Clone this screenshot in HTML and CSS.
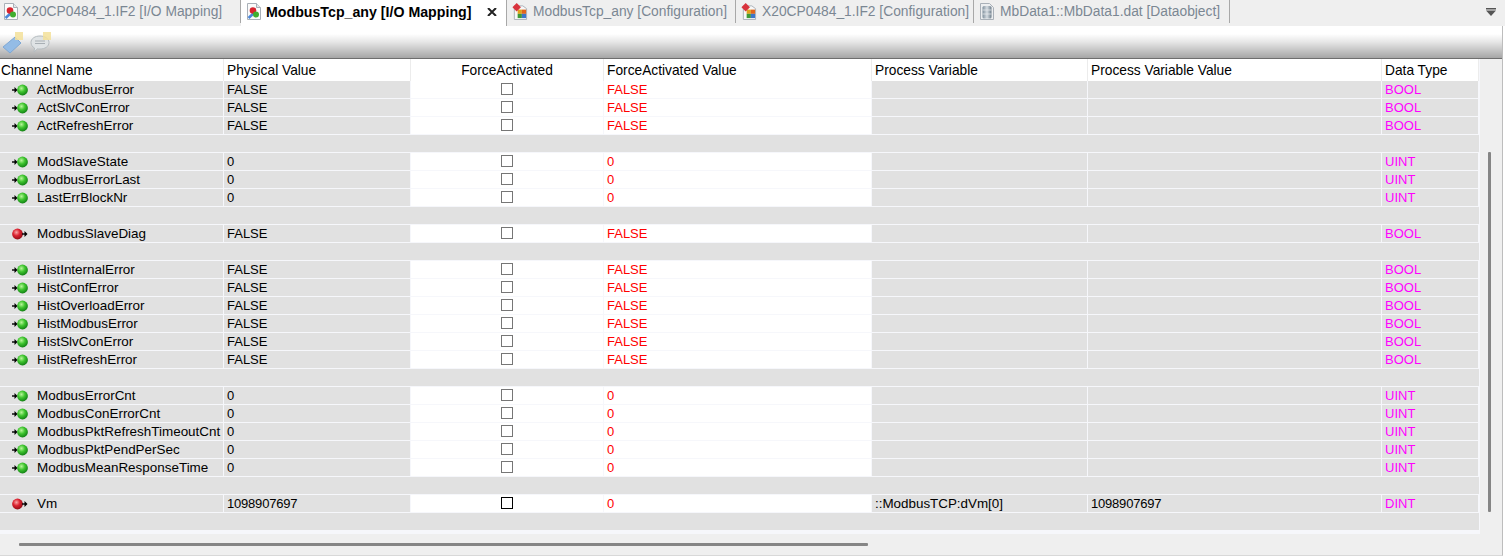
FILE: index.html
```html
<!DOCTYPE html>
<html lang="en">
<head>
    <meta charset="UTF-8">
    <title>ModbusTcp_any [I/O Mapping]</title>
    <link rel="stylesheet" href="styles.css">
</head>
<body>
    <svg class="defs" width="0" height="0">
        <defs>
            <radialGradient id="green-ball" cx="40%" cy="35%" r="70%">
                <stop offset="0" stop-color="#b8f59a"/>
                <stop offset="0.45" stop-color="#3fc52f"/>
                <stop offset="1" stop-color="#0d7a12"/>
            </radialGradient>
            <radialGradient id="red-ball" cx="40%" cy="35%" r="70%">
                <stop offset="0" stop-color="#f9a6a6"/>
                <stop offset="0.45" stop-color="#dc2230"/>
                <stop offset="1" stop-color="#8a0c14"/>
            </radialGradient>
            <linearGradient id="can" x1="0" x2="1" y1="0" y2="0">
                <stop offset="0" stop-color="#7f8f9c"/>
                <stop offset="0.5" stop-color="#d5dce2"/>
                <stop offset="1" stop-color="#6e7e8b"/>
            </linearGradient>
            <symbol id="ico-input" viewBox="0 0 16 12">
                <path d="M0 6h4" stroke="#000" stroke-width="1.4"/>
                <path d="M2.500 3 5.500 6 2.500 9z" fill="#000"/>
                <circle cx="10.500" cy="6" r="5.400" fill="url(#green-ball)"/>
            </symbol>
            <symbol id="ico-output" viewBox="0 0 16 12">
                <circle cx="5.500" cy="6" r="5.400" fill="url(#red-ball)"/>
                <path d="M10 6h4" stroke="#000" stroke-width="1.4"/>
                <path d="M12.500 3 15.500 6 12.500 9z" fill="#000"/>
            </symbol>
            <symbol id="ico-mapping" viewBox="0 0 16 19">
                <path d="M1.500 1.500h9l4 4v12h-13z" fill="#fbfbfb" stroke="#a9b0b8"/>
                <path d="M10.500 1.500v4h4" fill="#e4e7ea" stroke="#a9b0b8"/>
                <path d="M2.500 16 8 11" stroke="#4a86d8" stroke-width="2.600"/>
                <circle cx="7" cy="8.500" r="3.300" fill="#d8232e"/>
                <circle cx="10" cy="12.500" r="3" fill="#3fae2f"/>
            </symbol>
            <symbol id="ico-config" viewBox="0 0 17 19">
                <path d="M2.500 3.500h9l4 3v11.500h-13z" fill="#f7f7f7" stroke="#a9b0b8"/>
                <rect x="6" y="7.500" width="4.500" height="4.500" fill="#e0a21c"/>
                <rect x="10.500" y="7.500" width="4.500" height="4.500" fill="#e2661b"/>
                <rect x="6" y="12" width="4.500" height="4.500" fill="#3e9a35"/>
                <rect x="10.500" y="12" width="4.500" height="4.500" fill="#3c75c9"/>
                <path d="M5 0.500 9.500 5 5 9.500 0.500 5z" fill="#d8323c"/>
            </symbol>
            <symbol id="ico-data" viewBox="0 0 16 19">
                <path d="M1.500 1.500h9l4 4v12h-13z" fill="#eceef0" stroke="#a9b0b8"/>
                <rect x="3.500" y="4" width="9" height="12.500" rx="1.500" fill="url(#can)"/>
                <path d="M3.500 8h9M3.500 12h9" stroke="#eceef0" stroke-width="0.700"/>
            </symbol>
        </defs>
    </svg>

    <div class="tabbar">
        <div class="tab tab-first">
            <svg class="tab-icon"><use href="#ico-mapping"/></svg>
            <span>X20CP0484_1.IF2 [I/O Mapping]</span>
        </div>
        <div class="tab tab-active">
            <svg class="tab-icon"><use href="#ico-mapping"/></svg>
            <span>ModbusTcp_any [I/O Mapping]</span>
            <svg class="tab-close" viewBox="0 0 10 8"><path d="M1 0l8 8M9 0l-8 8"/></svg>
        </div>
        <div class="tab tab-third">
            <svg class="tab-icon"><use href="#ico-config"/></svg>
            <span>ModbusTcp_any [Configuration]</span>
        </div>
        <div class="tab tab-fourth">
            <svg class="tab-icon"><use href="#ico-config"/></svg>
            <span>X20CP0484_1.IF2 [Configuration]</span>
        </div>
        <div class="tab tab-fifth">
            <svg class="tab-icon"><use href="#ico-data"/></svg>
            <span>MbData1::MbData1.dat [Dataobject]</span>
        </div>
        <svg class="tab-menu" viewBox="0 0 10 8">
            <path d="M0 0h10v1.500H0z" fill="#555"/>
            <path d="M0 2.500h10L5 8z" fill="#555"/>
        </svg>
    </div>

    <div class="editor">
        <div class="toolbar">
            <svg class="tool-icon" viewBox="0 0 22 22">
                <path d="M1 15 13 5l6 6-11 10z" fill="#94bce6" stroke="#7fa8d4"/>
                <path d="M13 0h8v8h-8z" fill="#f3e09a" opacity="0.85"/>
            </svg>
            <svg class="tool-icon" viewBox="0 0 22 22">
                <path d="M10 4c5 0 9 2.500 9 6.500s-4 6.500-9 6.500c-1 0-2 0-2.500-.2L4 20l.5-4C2.500 15 1 13 1 10.500 1 6.500 5 4 10 4z" fill="#dfe3e5" stroke="#b5bcc0"/>
                <path d="M5 9h10M5 11.500h10" stroke="#a8afb4"/>
                <path d="M13 0h8v8h-8z" fill="#f3e09a" opacity="0.85"/>
            </svg>
        </div>

        <div class="body">
            <div class="grid-wrap">
                <div class="grid">
                    <div class="row head">
                        <div class="cell first">Channel Name</div>
                        <div class="cell indent">Physical Value</div>
                        <div class="cell center">ForceActivated</div>
                        <div class="cell indent">ForceActivated Value</div>
                        <div class="cell indent">Process Variable</div>
                        <div class="cell indent">Process Variable Value</div>
                        <div class="cell indent">Data Type</div>
                    </div>

                    <div class="row">
                        <div class="cell name"><svg class="io"><use href="#ico-input"/></svg>ActModbusError</div>
                        <div class="cell indent">FALSE</div>
                        <div class="cell force"><i class="check"></i></div>
                        <div class="cell force indent red">FALSE</div>
                        <div class="cell"></div>
                        <div class="cell"></div>
                        <div class="cell indent pink">BOOL</div>
                    </div>
                    <div class="row">
                        <div class="cell name"><svg class="io"><use href="#ico-input"/></svg>ActSlvConError</div>
                        <div class="cell indent">FALSE</div>
                        <div class="cell force"><i class="check"></i></div>
                        <div class="cell force indent red">FALSE</div>
                        <div class="cell"></div>
                        <div class="cell"></div>
                        <div class="cell indent pink">BOOL</div>
                    </div>
                    <div class="row">
                        <div class="cell name"><svg class="io"><use href="#ico-input"/></svg>ActRefreshError</div>
                        <div class="cell indent">FALSE</div>
                        <div class="cell force"><i class="check"></i></div>
                        <div class="cell force indent red">FALSE</div>
                        <div class="cell"></div>
                        <div class="cell"></div>
                        <div class="cell indent pink">BOOL</div>
                    </div>
                    <div class="row blank"></div>

                    <div class="row">
                        <div class="cell name"><svg class="io"><use href="#ico-input"/></svg>ModSlaveState</div>
                        <div class="cell indent">0</div>
                        <div class="cell force"><i class="check"></i></div>
                        <div class="cell force indent red">0</div>
                        <div class="cell"></div>
                        <div class="cell"></div>
                        <div class="cell indent pink">UINT</div>
                    </div>
                    <div class="row">
                        <div class="cell name"><svg class="io"><use href="#ico-input"/></svg>ModbusErrorLast</div>
                        <div class="cell indent">0</div>
                        <div class="cell force"><i class="check"></i></div>
                        <div class="cell force indent red">0</div>
                        <div class="cell"></div>
                        <div class="cell"></div>
                        <div class="cell indent pink">UINT</div>
                    </div>
                    <div class="row">
                        <div class="cell name"><svg class="io"><use href="#ico-input"/></svg>LastErrBlockNr</div>
                        <div class="cell indent">0</div>
                        <div class="cell force"><i class="check"></i></div>
                        <div class="cell force indent red">0</div>
                        <div class="cell"></div>
                        <div class="cell"></div>
                        <div class="cell indent pink">UINT</div>
                    </div>
                    <div class="row blank"></div>

                    <div class="row">
                        <div class="cell name"><svg class="io"><use href="#ico-output"/></svg>ModbusSlaveDiag</div>
                        <div class="cell indent">FALSE</div>
                        <div class="cell force"><i class="check"></i></div>
                        <div class="cell force indent red">FALSE</div>
                        <div class="cell"></div>
                        <div class="cell"></div>
                        <div class="cell indent pink">BOOL</div>
                    </div>
                    <div class="row blank"></div>

                    <div class="row">
                        <div class="cell name"><svg class="io"><use href="#ico-input"/></svg>HistInternalError</div>
                        <div class="cell indent">FALSE</div>
                        <div class="cell force"><i class="check"></i></div>
                        <div class="cell force indent red">FALSE</div>
                        <div class="cell"></div>
                        <div class="cell"></div>
                        <div class="cell indent pink">BOOL</div>
                    </div>
                    <div class="row">
                        <div class="cell name"><svg class="io"><use href="#ico-input"/></svg>HistConfError</div>
                        <div class="cell indent">FALSE</div>
                        <div class="cell force"><i class="check"></i></div>
                        <div class="cell force indent red">FALSE</div>
                        <div class="cell"></div>
                        <div class="cell"></div>
                        <div class="cell indent pink">BOOL</div>
                    </div>
                    <div class="row">
                        <div class="cell name"><svg class="io"><use href="#ico-input"/></svg>HistOverloadError</div>
                        <div class="cell indent">FALSE</div>
                        <div class="cell force"><i class="check"></i></div>
                        <div class="cell force indent red">FALSE</div>
                        <div class="cell"></div>
                        <div class="cell"></div>
                        <div class="cell indent pink">BOOL</div>
                    </div>
                    <div class="row">
                        <div class="cell name"><svg class="io"><use href="#ico-input"/></svg>HistModbusError</div>
                        <div class="cell indent">FALSE</div>
                        <div class="cell force"><i class="check"></i></div>
                        <div class="cell force indent red">FALSE</div>
                        <div class="cell"></div>
                        <div class="cell"></div>
                        <div class="cell indent pink">BOOL</div>
                    </div>
                    <div class="row">
                        <div class="cell name"><svg class="io"><use href="#ico-input"/></svg>HistSlvConError</div>
                        <div class="cell indent">FALSE</div>
                        <div class="cell force"><i class="check"></i></div>
                        <div class="cell force indent red">FALSE</div>
                        <div class="cell"></div>
                        <div class="cell"></div>
                        <div class="cell indent pink">BOOL</div>
                    </div>
                    <div class="row">
                        <div class="cell name"><svg class="io"><use href="#ico-input"/></svg>HistRefreshError</div>
                        <div class="cell indent">FALSE</div>
                        <div class="cell force"><i class="check"></i></div>
                        <div class="cell force indent red">FALSE</div>
                        <div class="cell"></div>
                        <div class="cell"></div>
                        <div class="cell indent pink">BOOL</div>
                    </div>
                    <div class="row blank"></div>

                    <div class="row">
                        <div class="cell name"><svg class="io"><use href="#ico-input"/></svg>ModbusErrorCnt</div>
                        <div class="cell indent">0</div>
                        <div class="cell force"><i class="check"></i></div>
                        <div class="cell force indent red">0</div>
                        <div class="cell"></div>
                        <div class="cell"></div>
                        <div class="cell indent pink">UINT</div>
                    </div>
                    <div class="row">
                        <div class="cell name"><svg class="io"><use href="#ico-input"/></svg>ModbusConErrorCnt</div>
                        <div class="cell indent">0</div>
                        <div class="cell force"><i class="check"></i></div>
                        <div class="cell force indent red">0</div>
                        <div class="cell"></div>
                        <div class="cell"></div>
                        <div class="cell indent pink">UINT</div>
                    </div>
                    <div class="row">
                        <div class="cell name"><svg class="io"><use href="#ico-input"/></svg>ModbusPktRefreshTimeoutCnt</div>
                        <div class="cell indent">0</div>
                        <div class="cell force"><i class="check"></i></div>
                        <div class="cell force indent red">0</div>
                        <div class="cell"></div>
                        <div class="cell"></div>
                        <div class="cell indent pink">UINT</div>
                    </div>
                    <div class="row">
                        <div class="cell name"><svg class="io"><use href="#ico-input"/></svg>ModbusPktPendPerSec</div>
                        <div class="cell indent">0</div>
                        <div class="cell force"><i class="check"></i></div>
                        <div class="cell force indent red">0</div>
                        <div class="cell"></div>
                        <div class="cell"></div>
                        <div class="cell indent pink">UINT</div>
                    </div>
                    <div class="row">
                        <div class="cell name"><svg class="io"><use href="#ico-input"/></svg>ModbusMeanResponseTime</div>
                        <div class="cell indent">0</div>
                        <div class="cell force"><i class="check"></i></div>
                        <div class="cell force indent red">0</div>
                        <div class="cell"></div>
                        <div class="cell"></div>
                        <div class="cell indent pink">UINT</div>
                    </div>
                    <div class="row blank"></div>

                    <div class="row">
                        <div class="cell name"><svg class="io"><use href="#ico-output"/></svg>Vm</div>
                        <div class="cell indent digits">1098907697</div>
                        <div class="cell force"><i class="check check-on"></i></div>
                        <div class="cell force indent red">0</div>
                        <div class="cell indent variable">::ModbusTCP:dVm[0]</div>
                        <div class="cell indent digits">1098907697</div>
                        <div class="cell indent pink">DINT</div>
                    </div>
                    <div class="row blank"></div>
                </div>
                <div class="hscroll"><div class="hthumb"></div></div>
            </div>
            <div class="vscroll"><div class="vthumb"></div></div>
        </div>
    </div>
</body>
</html>
```

FILE: styles.css
```css
html, body {
    margin: 0;
    padding: 0;
    height: 100%;
    overflow: hidden;
    background-color: #fff;
}

body {
    font-family: "Liberation Sans", Arial, sans-serif;
    font-size: 13px;
    color: #000;
}

.defs {
    position: absolute;
}

/* tab strip */
.tabbar {
    display: flex;
    align-items: stretch;
    height: 26px;
    background-color: #efefef;
}

.tab {
    display: flex;
    align-items: center;
    height: 23px;
    box-sizing: border-box;
    padding-left: 5px;
    border-right: 1px solid #a8a8a8;
    color: #7b8793;
    font-size: 13.8px;
    white-space: nowrap;
}

.tab-icon {
    width: 16px;
    height: 19px;
    flex: none;
    margin-right: 5px;
}

.tab-first {
    width: 241px;
    padding-left: 3px;
}

.tab-first .tab-icon {
    margin-right: 3px;
}

.tab-active {
    width: 266px;
    height: 26px;
    padding-bottom: 3px;
    background-color: #fff;
    color: #000;
    font-size: 14.2px;
    font-weight: bold;
}

.tab-active .tab-icon {
    margin-right: 4px;
}

.tab-close {
    width: 10px;
    height: 8px;
    margin-left: 16px;
    fill: none;
    stroke: #222;
    stroke-width: 2;
}

.tab-third {
    width: 229px;
}

.tab-fourth {
    width: 238px;
}

.tab-fifth {
    width: 256px;
}

.tab-menu {
    width: 10px;
    height: 8px;
    margin: 8px 0 0 256px;
}

/* editor */
.editor {
    width: 1503px;
    height: 530px;
    display: flex;
    flex-direction: column;
    box-sizing: border-box;
    border-right: 1px solid #bdbdbd;
    border-bottom: 1px solid #d8d8d8;
    background-color: #efefef;
}

.toolbar {
    display: flex;
    gap: 6px;
    height: 33px;
    box-sizing: border-box;
    padding: 6px 0 0 2px;
    border-bottom: 1px solid #6e6e6e;
    background: linear-gradient(#fff 0, #fff 25%, #e6e6e6 50%, #a6a6a6 100%);
}

.tool-icon {
    width: 22px;
    height: 22px;
}

.body {
    display: flex;
    flex: 1;
}

.grid-wrap {
    width: 1480px;
}

.grid {
    width: 1479px;
    border-right: 1px solid #f6f7fb;
    background-color: #f6f7fb;
    padding-bottom: 3px;
}

.row {
    display: grid;
    grid-template-columns: 224px 187px 193px 268px 216px 294px 97px;
    height: 17px;
    margin-bottom: 1px;
    line-height: 17px;
    background-color: #e1e1e1;
}

.head {
    height: 22px;
    margin-bottom: 0;
    font-size: 13.75px;
    line-height: 23px;
    background-color: #fff;
}

.head .cell {
    border-right-color: #ececec;
}

.blank {
    display: block;
}

.cell {
    box-sizing: border-box;
    border-right: 1px solid #f6f7fb;
    white-space: nowrap;
    overflow: hidden;
}

.first {
    padding-left: 1px;
}

.indent {
    padding-left: 3px;
}

.center {
    text-align: center;
}

.name {
    display: flex;
    align-items: center;
    font-size: 13.45px;
}

.io {
    width: 16px;
    height: 12px;
    flex: none;
    margin: 0 9px 0 12px;
}

.digits {
    letter-spacing: -0.2px;
}

.variable {
    font-size: 13.4px;
}

.force {
    background-color: #fff;
}

.red {
    color: #f00;
}

.pink {
    color: #f0f;
}

.check {
    display: block;
    width: 12px;
    height: 12px;
    box-sizing: border-box;
    margin: 2px 0 0 90px;
    border: 1px solid #767676;
    background-color: #fff;
}

.check-on {
    border-color: #000;
}

/* scrollbars */
.hscroll {
    padding: 9px 0 0 19px;
}

.hthumb {
    width: 849px;
    height: 3px;
    background-color: #858585;
    border-radius: 1px;
}

.vscroll {
    padding: 93px 0 0 8px;
}

.vthumb {
    width: 3px;
    height: 360px;
    background-color: #858585;
    border-radius: 1px;
}
```
